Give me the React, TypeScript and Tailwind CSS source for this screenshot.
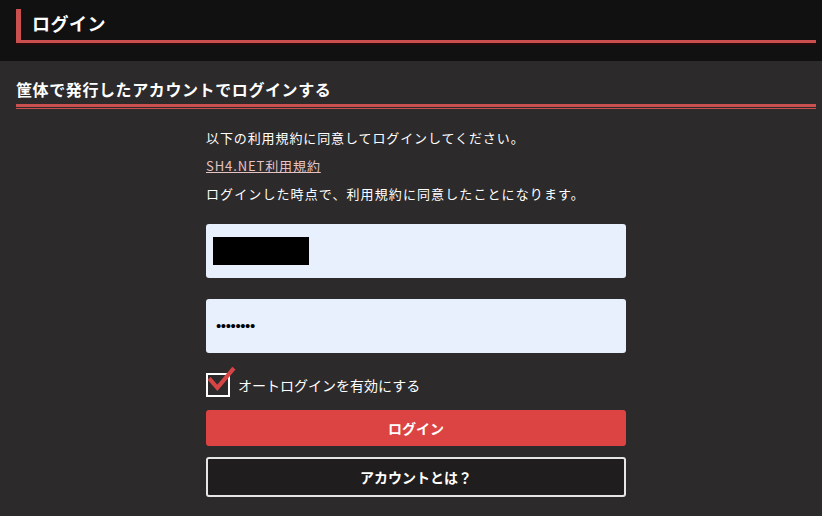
import React from "react";

export default function App() {
  const font = { fontFamily: '"Noto Sans CJK JP", "Noto Sans", sans-serif' };
  return (
    <div className="w-[822px] h-[516px] bg-[#2c2a2b] overflow-hidden text-white" style={font}>
      <div className="bg-[#111112] h-[61px] pt-[9px] pl-4 pr-[6px]">
        <div className="h-[34px] border-l-[5px] border-b-[3px] border-[#c9504e] flex items-center pl-[11px] shadow-[0_2px_0_#2a0a0a]">
          <span className="text-[18px] font-bold leading-none tracking-[0.5px] mt-[-4px]">ログイン</span>
        </div>
      </div>
      <div className="pl-4 pr-[6px] pt-[17px]">
        <div className="text-[16px] font-bold leading-[22px] tracking-[0.6px]">筐体で発行したアカウントでログインする</div>
        <div className="mt-[4px] h-[3px] bg-[#c9504e]" />
        <div className="mt-[1px] h-[1px] bg-[#c9504e]" />
      </div>
      <div className="w-[420px] ml-[206px] mt-[19px] text-[13px] tracking-[0.9px]">
        <p className="leading-[20px]">以下の利用規約に同意してログインしてください。</p>
        <p className="leading-[20px] mt-[8px]">
          <a className="underline text-[#e6c3c3]">SH4.NET利用規約</a>
        </p>
        <p className="leading-[20px] mt-[8px] tracking-[1.1px]">ログインした時点で、利用規約に同意したことになります。</p>
        <div className="mt-[20px] h-[54px] rounded-[3px] bg-[#e8f0fe] flex items-center px-[7px]">
          <div className="w-[96px] h-[28px] bg-black" />
        </div>
        <div className="mt-[21px] h-[54px] rounded-[3px] bg-[#e8f0fe] flex items-center px-[10px]">
          <span className="text-black text-[15px] tracking-[-0.4px] font-['Liberation_Sans',sans-serif]">••••••••</span>
        </div>
        <div className="mt-[20px] flex items-center h-[24px] tracking-normal">
          <div className="relative w-[24px] h-[24px] border-2 border-white">
            <svg className="absolute left-[-2px] top-[-11px]" width="31" height="31" viewBox="0 0 30 30">
              <path d="M3 14 L11 23 L27 4" fill="none" stroke="#d64545" strokeWidth="4" strokeLinejoin="miter" />
            </svg>
          </div>
          <span className="ml-[8px] text-[14px]">オートログインを有効にする</span>
        </div>
        <button className="mt-[13px] w-full h-[36px] rounded-[3px] bg-[#dc4343] text-[14px] font-bold text-white flex items-center justify-center tracking-normal">
          ログイン
        </button>
        <button className="mt-[11px] w-full h-[40px] rounded-[3px] bg-[#1f1d1e] border-2 border-[#e6e6e6] text-[14px] font-bold text-white flex items-center justify-center tracking-normal">
          アカウントとは？
        </button>
      </div>
    </div>
  );
}
